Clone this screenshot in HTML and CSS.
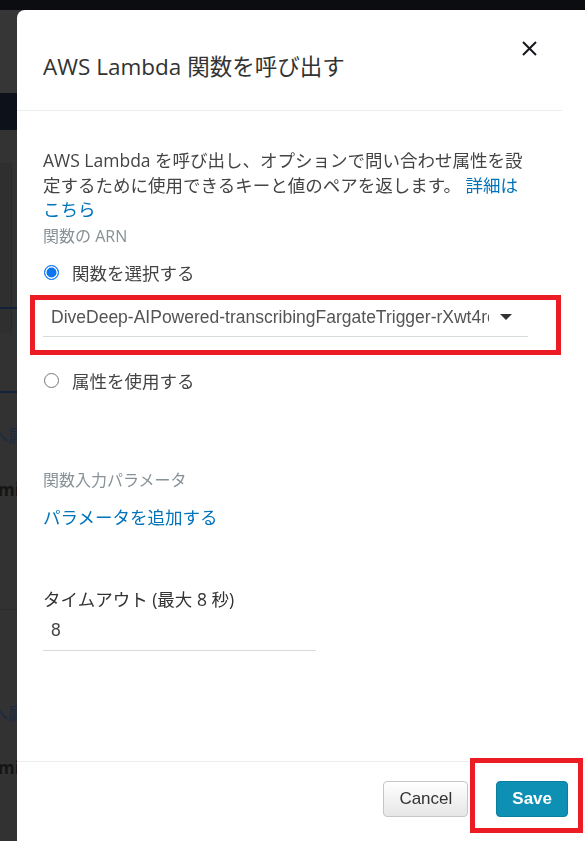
FILE: index.html
```html
<!DOCTYPE html>
<html lang="ja">
<head>
    <meta charset="UTF-8">
    <title>AWS Lambda 関数を呼び出す</title>
    <link rel="stylesheet" href="styles.css">
</head>
<body>

    <!-- dimmed page behind the dialog -->
    <div class="backdrop">
        <div class="bg-top"></div>
        <div class="bg-bar"></div>
        <div class="bg-nav"></div>
        <div class="bg-gap"></div>
        <div class="bg-panel">
            <div class="bg-rule"></div>
        </div>
        <div class="bg-rule bg-rule-low"></div>
        <div class="bg-row bg-link">へ属性</div>
        <div class="bg-row bg-name">mini</div>
        <div class="bg-split"></div>
        <div class="bg-row bg-link bg-link-2">へ属性</div>
        <div class="bg-row bg-name">mini</div>
    </div>

    <div class="modal">
        <div class="modal-header">
            <h2 class="modal-title">AWS Lambda 関数を呼び出す</h2>
            <button class="close" aria-label="close">
                <svg width="15" height="15" viewBox="0 0 15 15">
                    <path d="M1 1L14 14M14 1L1 14" stroke="#16191f" stroke-width="2" fill="none"/>
                </svg>
            </button>
        </div>

        <div class="modal-body">
            <p class="desc">AWS Lambda を呼び出し、オプションで問い合わせ属性を設<br>定するために使用できるキーと値のペアを返します。 <a href="#" class="link">詳細は<br>こちら</a></p>

            <div class="field-label">関数の ARN</div>
            <label class="radio"><span class="radio-dot checked"></span>関数を選択する</label>

            <div class="callout">
                <div class="select">
                    <span class="select-value">DiveDeep-AIPowered-transcribingFargateTrigger-rXwt4rcQ</span>
                    <span class="caret"></span>
                </div>
            </div>

            <label class="radio radio-second"><span class="radio-dot"></span>属性を使用する</label>

            <div class="field-label params-label">関数入力パラメータ</div>
            <a href="#" class="link add-link">パラメータを追加する</a>

            <div class="timeout-label">タイムアウト (最大 8 秒)</div>
            <div class="text-input">8</div>
        </div>

        <div class="modal-footer">
            <button class="btn btn-cancel">Cancel</button>
            <div class="callout callout-save">
                <button class="btn btn-save">Save</button>
            </div>
        </div>
    </div>

</body>
</html>
```

FILE: styles.css
```css
body {
    margin: 0;
    background-color: #323232;
    font-family: 'Open Sans', 'Noto Sans CJK JP', sans-serif;
    overflow: hidden;
}

/* background page */
.backdrop {
    height: 841px;
}
.bg-top {
    height: 10px;
    background-color: #0b0d10;
}
.bg-bar {
    height: 83px;
    background-color: #363636;
}
.bg-nav {
    height: 37px;
    background-color: #0d1119;
}
.bg-gap {
    height: 33px;
    background-color: #333;
}
.bg-panel {
    height: 170px;
    width: 12px;
    background-color: #2f2f2f;
    border-right: 1px solid #2a2a2a;
    display: flex;
    flex-direction: column;
    justify-content: flex-end;
    padding-bottom: 24px;
    box-sizing: border-box;
}
.bg-rule {
    height: 2px;
    width: 17px;
    background-color: #14213a;
}
.bg-rule-low {
    margin-top: 58px;
}
.bg-row {
    height: 54px;
    line-height: 54px;
    white-space: nowrap;
    font-size: 17px;
}
.bg-link {
    margin-top: 16px;
    margin-left: -9px;
    color: #1b2a44;
}
.bg-link-2 {
    margin-top: 77px;
}
.bg-name {
    height: 56px;
    color: #151515;
    font-weight: 700;
    margin-left: -2px;
}
.bg-split {
    height: 1px;
    margin-top: 90px;
    background-color: #2b2b2b;
}

/* dialog */
.modal {
    position: fixed;
    top: 10px;
    left: 17px;
    width: 568px;
    bottom: 0;
    background-color: #fff;
    border-top-left-radius: 8px;
    display: flex;
    flex-direction: column;
}
.modal-header {
    height: 100px;
    margin-right: 23px;
    padding-left: 26px;
    border-bottom: 1px solid #eaeded;
    display: flex;
    justify-content: space-between;
    align-items: flex-start;
}
.modal-title {
    margin: 0;
    padding-top: 42px;
    font-size: 22.5px;
    line-height: 30px;
    font-weight: 400;
    color: #333;
}
.close {
    margin: 31px 25px 0 0;
    padding: 0;
    width: 15px;
    height: 15px;
    border: none;
    background: none;
    display: flex;
}
.modal-body {
    flex: 1;
    padding: 37px 0 0 26px;
    font-size: 17.5px;
    color: #444;
}
.desc {
    margin: 0;
    line-height: 24.5px;
}
.link {
    color: #0073bb;
    text-decoration: none;
}
.field-label {
    margin-top: 4.5px;
    font-size: 16px;
    line-height: 20px;
    color: #879196;
}
.radio {
    margin-top: 14px;
    height: 24px;
    display: flex;
    align-items: center;
}
.radio-second {
    margin-top: 13px;
}
.radio-dot {
    width: 15px;
    height: 15px;
    margin: 1px 13px 0 1px;
    border: 1px solid #767676;
    border-radius: 50%;
    box-sizing: border-box;
    background-color: #fff;
}
.radio-dot.checked {
    border: 1.5px solid #0b76f0;
    background-color: #0b76f0;
    box-shadow: inset 0 0 0 1.5px #fff;
}

/* red annotation frames */
.callout {
    border: 5px solid #ec1c24;
}
.modal-body .callout {
    margin: 11px 0 0 -13px;
    width: 531px;
    box-sizing: border-box;
    padding: 5px 28px 13px 8px;
}
.select {
    display: flex;
    align-items: center;
    padding-bottom: 7px;
    border-bottom: 1px solid #d5dbdb;
}
.select-value {
    flex: 1;
    min-width: 0;
    padding-left: 8px;
    overflow: hidden;
    white-space: nowrap;
    font-family: 'Liberation Sans', sans-serif;
    line-height: 24px;
    color: #545454;
}
.caret {
    margin: 0 16px 0 11px;
    border-left: 6px solid transparent;
    border-right: 6px solid transparent;
    border-top: 6px solid #333;
}
.params-label {
    margin-top: 78px;
}
.add-link {
    display: block;
    margin-top: 15px;
    line-height: 24px;
}
.timeout-label {
    margin-top: 58px;
    line-height: 24px;
    color: #333;
}
.text-input {
    margin-top: 7px;
    width: 273px;
    box-sizing: border-box;
    padding: 0 0 8px 8px;
    border-bottom: 1px solid #d5dbdb;
    font-family: 'Liberation Sans', sans-serif;
    line-height: 24px;
}

/* footer */
.modal-footer {
    height: 80px;
    box-sizing: border-box;
    border-top: 1px solid #eaeded;
    display: flex;
    justify-content: flex-end;
    align-items: flex-start;
    padding-right: 2px;
}
.btn {
    height: 36px;
    border-radius: 4px;
    font-family: 'Liberation Sans', sans-serif;
    font-size: 17px;
    cursor: pointer;
}
.btn-cancel {
    margin-top: 19px;
    padding: 0 15px;
    color: #333;
    border: 1px solid #c6c6c6;
    background: linear-gradient(#ffffff, #e6e6e6);
}
.callout-save {
    margin: -4px 0 0 2px;
    padding: 18px 10px 11px 21px;
}
.btn-save {
    display: block;
    padding: 0 15px;
    color: #fff;
    font-weight: 700;
    border: 1px solid #0b7d9e;
    background-color: #0d90b4;
}
```
